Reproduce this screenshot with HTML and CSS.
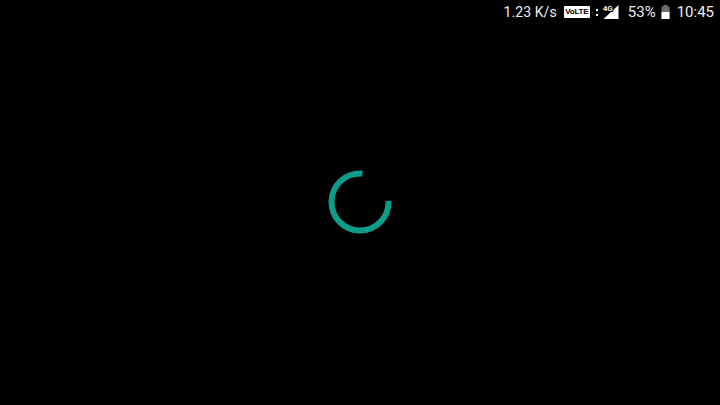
FILE: index.html
```html
<!DOCTYPE html>
<html lang="en">
  <head>
    <meta charset="UTF-8" />
    <meta name="viewport" content="width=device-width, initial-scale=1.0" />
    <title>Loading</title>
    <link rel="stylesheet" href="styles.css">
  </head>
  <body>
    <div class="screen">
      <div class="status">
        <span class="status__speed">1.23 K/s</span>
        <span class="status__volte">VoLTE</span>
        <span class="status__arrows">
          <i class="status__dot"></i>
          <i class="status__dot"></i>
        </span>
        <span class="status__signal">
          <svg class="status__triangle" width="16" height="14" viewBox="0 0 16 14">
            <path d="M15.500 0V14H.5Z" fill="#fff" />
          </svg>
          <span class="status__net">4G</span>
        </span>
        <span class="status__percent">53%</span>
        <svg class="status__battery" width="9" height="14" viewBox="0 0 9 14">
          <path d="M2.500 0H6.500V1.500H8.500V14H.5V1.500H2.500Z" fill="#6e6e6e" />
          <path d="M.5 7H8.500V14H.5Z" fill="#fff" />
        </svg>
        <span class="status__time">10:45</span>
      </div>
      <div class="main">
        <svg class="spinner" width="64" height="64" viewBox="0 0 64 64">
          <path d="M34.500 3.600A28.500 28.500 0 1 0 60.500 31" fill="none" stroke="#0e9c8a" stroke-width="6" />
        </svg>
      </div>
    </div>
  </body>
</html>
```

FILE: styles.css
```css
* {
  box-sizing: border-box;
}

body {
  margin: 0;
  background: #000;
}

.screen {
  display: grid;
  grid-template-rows: 24px 1fr 25px;
  width: 720px;
  height: 405px;
  overflow: hidden;
}

.status {
  display: flex;
  align-items: center;
  justify-content: flex-end;
  padding-right: 6px;
  color: #eee;
  font-family: Roboto, sans-serif;
  font-size: 15px;
}

.status__speed {
  margin-right: 7px;
  font-size: 14px;
  letter-spacing: .1px;
}

.status__volte {
  width: 26px;
  height: 12px;
  margin-right: 6px;
  background: #fff;
  border-radius: 1px;
  color: #000;
  font-family: "Liberation Sans", sans-serif;
  font-size: 8px;
  font-weight: 700;
  line-height: 12px;
  letter-spacing: -.2px;
  text-align: center;
}

.status__arrows {
  display: flex;
  flex-direction: column;
  gap: 3px;
  margin-right: 5px;
}

.status__dot {
  display: block;
  width: 2px;
  height: 2px;
  background: #fff;
}

.status__signal {
  position: relative;
  width: 16px;
  height: 14px;
  margin-right: 9px;
}

.status__triangle {
  display: block;
}

.status__net {
  position: absolute;
  top: 0;
  left: 0;
  font-size: 8px;
  font-weight: 700;
  line-height: 8px;
  text-shadow: 1px 1px 0 #000;
}

.status__percent {
  margin-right: 5px;
}

.status__battery {
  margin-right: 7px;
}

.main {
  grid-row: 2;
  display: flex;
  align-items: center;
  justify-content: center;
}

.spinner {
  display: block;
}
```
